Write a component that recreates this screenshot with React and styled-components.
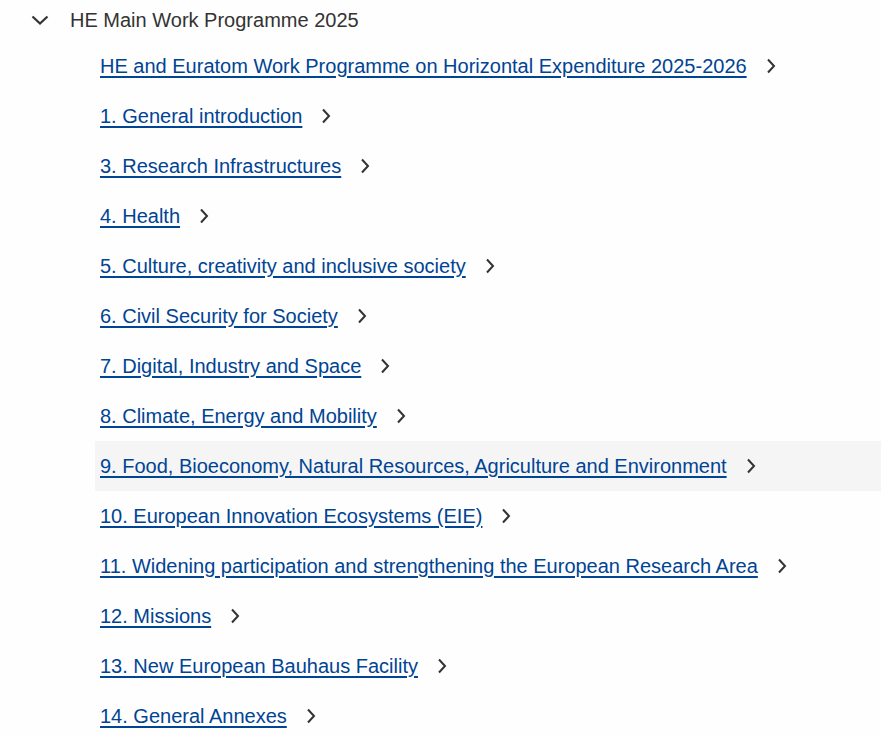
import React from 'react';
import styled, { createGlobalStyle } from 'styled-components';

const GlobalStyle = createGlobalStyle`
  html, body {
    margin: 0;
    padding: 0;
    background: #fefefe;
    font-family: Arial, "Liberation Sans", sans-serif;
  }
`;

const Tree = styled.div`
  width: 881px;
  overflow: hidden;
`;

const Header = styled.div`
  display: flex;
  align-items: center;
  height: 41px;
  padding-left: 31px;
  box-sizing: border-box;
  color: #333;
  font-size: 20px;
  padding-bottom: 1px;
`;

const HeaderLabel = styled.span`
  margin-left: 21px;
`;

const List = styled.ul`
  list-style: none;
  margin: 0;
  padding: 0 0 0 95px;
`;

const Item = styled.li`
  display: flex;
  align-items: center;
  height: 50px;
  padding-left: 5px;
  background: ${(p) => (p.active ? '#f5f5f5' : 'transparent')};
`;

const Link = styled.a`
  color: #004494;
  font-size: 20px;
  text-decoration: underline;
  text-underline-offset: 3px;
  text-decoration-thickness: 1.5px;
  cursor: pointer;
`;

const Arrow = styled.svg`
  margin-left: 19px;
  flex-shrink: 0;
`;

const ChevronDown = () => (
  <svg width="18" height="10" viewBox="0 0 18 10">
    <path d="M1.5 1.5 L9 8.5 L16.5 1.5" fill="none" stroke="#333" strokeWidth="2.2" />
  </svg>
);

const ChevronRight = () => (
  <Arrow width="10" height="16" viewBox="0 0 10 16">
    <path d="M2 1.5 L8 8 L2 14.5" fill="none" stroke="#333" strokeWidth="2" />
  </Arrow>
);

const items = [
  'HE and Euratom Work Programme on Horizontal Expenditure 2025-2026',
  '1. General introduction',
  '3. Research Infrastructures',
  '4. Health',
  '5. Culture, creativity and inclusive society',
  '6. Civil Security for Society',
  '7. Digital, Industry and Space',
  '8. Climate, Energy and Mobility',
  '9. Food, Bioeconomy, Natural Resources, Agriculture and Environment',
  '10. European Innovation Ecosystems (EIE)',
  '11. Widening participation and strengthening the European Research Area',
  '12. Missions',
  '13. New European Bauhaus Facility',
  '14. General Annexes',
];

export default function App() {
  return (
    <Tree>
      <GlobalStyle />
      <Header>
        <ChevronDown />
        <HeaderLabel>HE Main Work Programme 2025</HeaderLabel>
      </Header>
      <List>
        {items.map((label, i) => (
          <Item key={label} active={i === 8}>
            <Link>{label}</Link>
            <ChevronRight />
          </Item>
        ))}
      </List>
    </Tree>
  );
}
